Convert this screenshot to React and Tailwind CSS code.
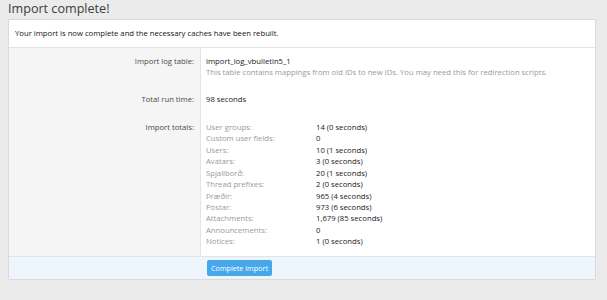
import React from "react";

const totals = [
  ["User groups:", "14 (0 seconds)"],
  ["Custom user fields:", "0"],
  ["Users:", "10 (1 seconds)"],
  ["Avatars:", "3 (0 seconds)"],
  ["Spjallborð:", "20 (1 seconds)"],
  ["Thread prefixes:", "2 (0 seconds)"],
  ["Þræðir:", "965 (4 seconds)"],
  ["Póstar:", "973 (6 seconds)"],
  ["Attachments:", "1,679 (85 seconds)"],
  ["Announcements:", "0"],
  ["Notices:", "1 (0 seconds)"],
];

export default function App() {
  return (
    <div
      className="w-[607px] h-[300px] overflow-hidden bg-[#ebebeb] text-[7.7px] leading-[11.45px]"
      style={{ fontFamily: '"Open Sans", "Noto Sans", sans-serif' }}
    >
      <div className="h-[19px] px-[8px] pt-[1px]">
        <div className="text-[12.6px] leading-[16px] text-[#3c3c3c]">Import complete!</div>
      </div>
      <div className="ml-[8px] w-[588px] border border-[#dadada] bg-white rounded-[2px]">
        <div className="h-[28px] flex items-center px-[6px] text-[#141414] border-b border-[#e4e4e4]">
          Your import is now complete and the necessary caches have been rebuilt.
        </div>
        <div className="grid grid-cols-[192px_1fr]">
          <div className="bg-[#f5f5f5] border-r border-[#e4e4e4] text-right pr-[6px] pt-[7.5px] pb-[8px] text-[#4a4a4a]">
            Import log table:
          </div>
          <div className="pl-[5px] pt-[7.5px] pb-[8px]">
            <div className="text-[#1a1a1a]">import_log_vbulletin5_1</div>
            <div className="text-[#9a9a9a]">
              This table contains mappings from old IDs to new IDs. You may need this for redirection scripts.
            </div>
          </div>
          <div className="bg-[#f5f5f5] border-r border-[#e4e4e4] text-right pr-[6px] py-[8px] text-[#4a4a4a]">
            Total run time:
          </div>
          <div className="pl-[5px] py-[8px] text-[#1a1a1a]">98 seconds</div>
          <div className="bg-[#f5f5f5] border-r border-[#e4e4e4] text-right pr-[6px] py-[8px] text-[#4a4a4a]">
            Import totals:
          </div>
          <div className="pl-[5px] py-[8px]">
            {totals.map(([k, v]) => (
              <div key={k} className="grid grid-cols-[110px_1fr]">
                <div className="text-[#9a9a9a]">{k}</div>
                <div className="text-[#1a1a1a]">{v}</div>
              </div>
            ))}
          </div>
        </div>
        <div className="h-[23px] bg-[#eef5fd] border-t border-[#dde6ef] grid grid-cols-[192px_1fr] items-center">
          <div />
          <div className="pl-[6px] flex">
            <button className="w-[65px] h-[16px] rounded-[2px] bg-[#47a7eb] text-white text-[7.2px] leading-[16px] whitespace-nowrap">
              Complete import
            </button>
          </div>
        </div>
      </div>
    </div>
  );
}
